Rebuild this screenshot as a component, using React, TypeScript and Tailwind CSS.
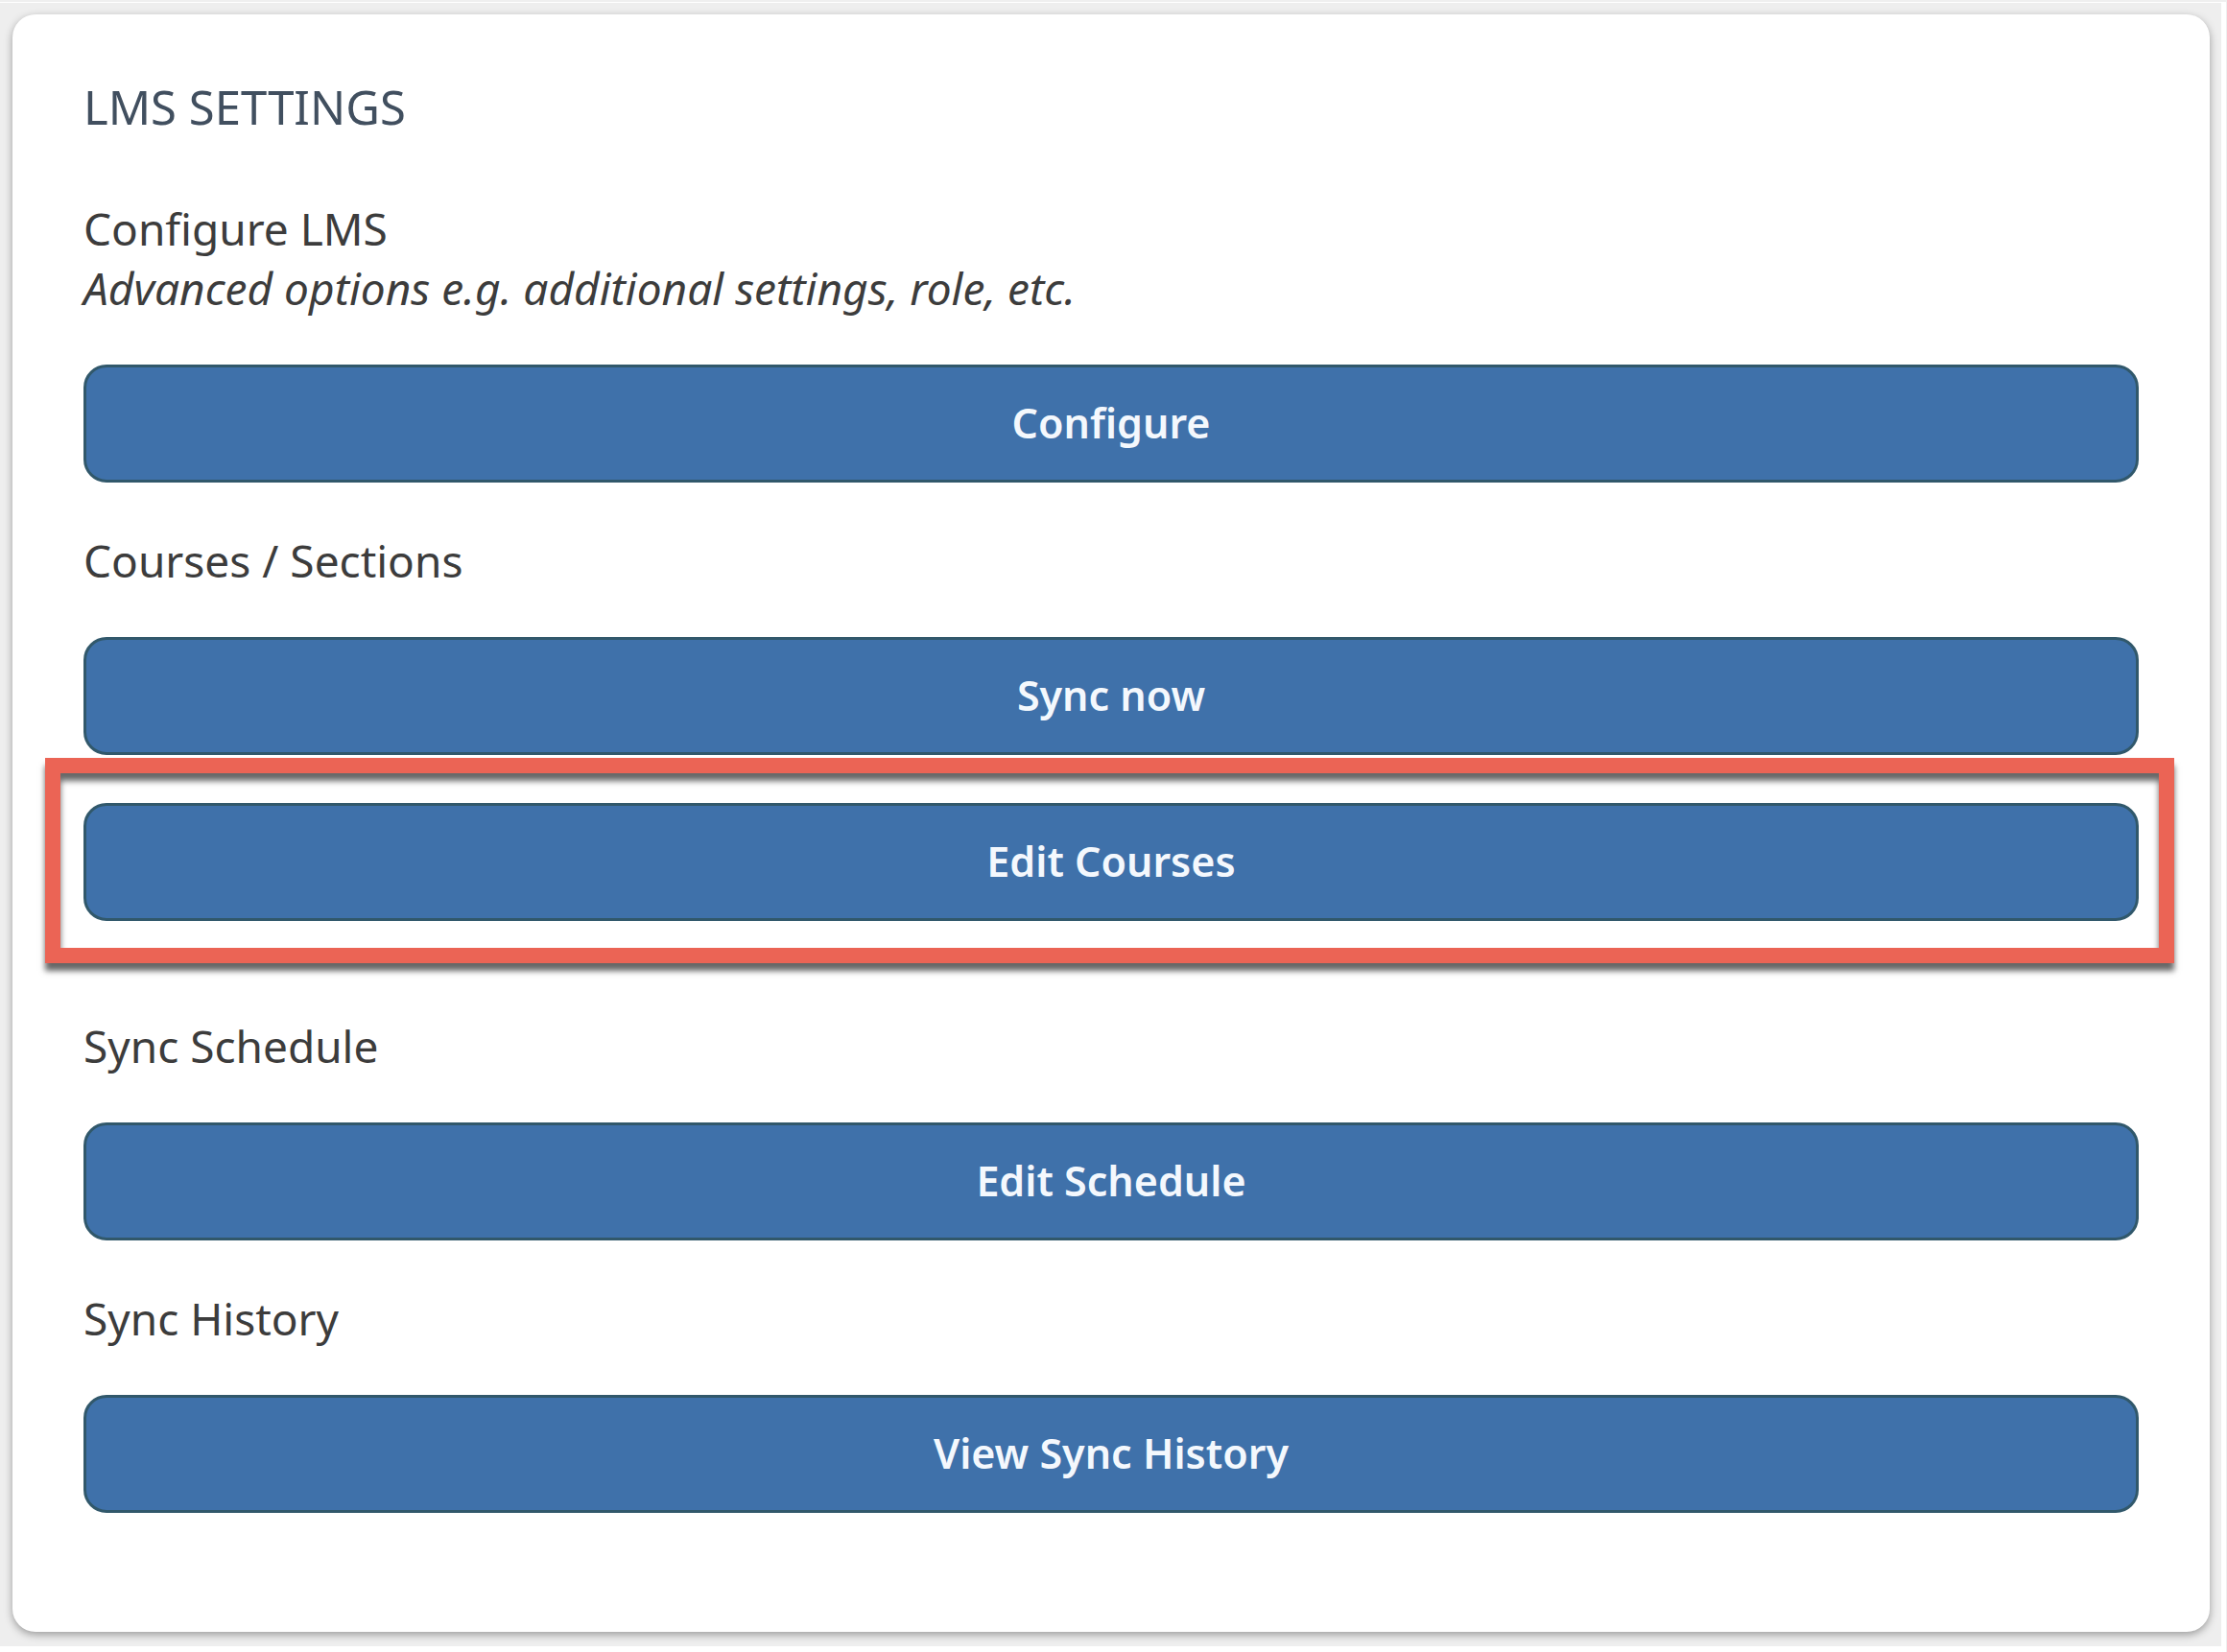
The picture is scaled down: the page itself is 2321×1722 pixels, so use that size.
import type { ReactNode } from 'react';

interface SettingButtonProps {
  children: ReactNode;
}

function SettingButton({ children }: SettingButtonProps) {
  return (
    <button
      type="button"
      className="block h-[123px] w-full rounded-3xl border-3 border-[#31586b] bg-[#3f71aa] pb-0.5 text-[43px] leading-[62px] font-semibold text-[#f4f8fd]"
    >
      {children}
    </button>
  );
}

interface SettingGroupProps {
  title: string;
  hint?: string;
  children: ReactNode;
}

function SettingGroup({ title, hint, children }: SettingGroupProps) {
  return (
    <section>
      <h2 className="text-[46px] leading-[62px]">{title}</h2>
      {hint && <p className="text-[46px] leading-[62px] italic">{hint}</p>}
      <div className="mt-[49px] flex flex-col gap-[50px]">{children}</div>
    </section>
  );
}

export default function App() {
  return (
    <div className="border-t-2 border-r border-[#efefef] bg-white pt-px pr-[5px] pb-1.5 font-['Noto_Sans',sans-serif] text-[#3c3c3c]">
      <div className="bg-[#eeeeee] pt-3 pr-3 pb-[15px] pl-[13px]">
        <main className="rounded-3xl bg-white px-[74px] pt-[63px] pb-[124px] shadow-[0_3px_9px_rgba(0,0,0,0.35)]">
          <h1 className="text-[49px] leading-[66px] text-[#414f5f]">LMS SETTINGS</h1>

          <div className="mt-[63px] flex flex-col gap-[50px]">
            <SettingGroup
              title="Configure LMS"
              hint="Advanced options e.g. additional settings, role, etc."
            >
              <SettingButton>Configure</SettingButton>
            </SettingGroup>

            <SettingGroup title="Courses / Sections">
              <SettingButton>Sync now</SettingButton>
              <div className="relative mb-[49px]">
                <SettingButton>Edit Courses</SettingButton>
                {/* Callout frame around the button */}
                <div className="pointer-events-none absolute -top-[47px] -right-[37px] -bottom-11 -left-10 border-16 border-[#eb6455] shadow-[0_8px_6px_rgba(0,0,0,0.6),inset_0_8px_6px_rgba(0,0,0,0.6)]" />
              </div>
            </SettingGroup>

            <SettingGroup title="Sync Schedule">
              <SettingButton>Edit Schedule</SettingButton>
            </SettingGroup>

            <SettingGroup title="Sync History">
              <SettingButton>View Sync History</SettingButton>
            </SettingGroup>
          </div>
        </main>
      </div>
    </div>
  );
}
